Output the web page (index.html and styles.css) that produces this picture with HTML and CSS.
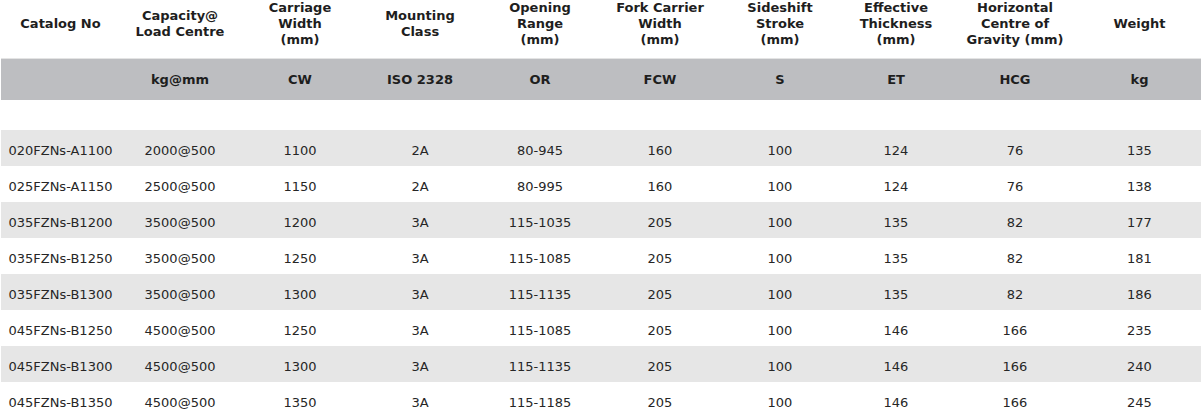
FILE: index.html
```html
<!DOCTYPE html>
<html>
<head>
<meta charset="utf-8">
<link rel="stylesheet" href="styles.css">
</head>
<body>
<table class="spec">
  <colgroup>
    <col class="c1"><col class="c2"><col class="c2"><col class="c2"><col class="c2"><col class="c2"><col class="c2"><col class="c8"><col class="c9"><col class="c10">
  </colgroup>
  <thead>
    <tr class="titles">
      <th>Catalog No</th>
      <th>Capacity@<br>Load Centre</th>
      <th>Carriage<br>Width<br>(mm)</th>
      <th>Mounting<br>Class</th>
      <th>Opening<br>Range<br>(mm)</th>
      <th>Fork Carrier<br>Width<br>(mm)</th>
      <th>Sideshift<br>Stroke<br>(mm)</th>
      <th>Effective<br>Thickness<br>(mm)</th>
      <th>Horizontal<br>Centre of<br>Gravity (mm)</th>
      <th>Weight</th>
    </tr>
    <tr class="units">
      <th></th><th>kg@mm</th><th>CW</th><th>ISO 2328</th><th>OR</th><th>FCW</th><th>S</th><th>ET</th><th>HCG</th><th>kg</th>
    </tr>
  </thead>
  <tbody>
    <tr class="spacer"><td colspan="10"></td></tr>
    <tr><td>020FZNs-A1100</td><td>2000@500</td><td>1100</td><td>2A</td><td>80-945</td><td>160</td><td>100</td><td>124</td><td>76</td><td>135</td></tr>
    <tr><td>025FZNs-A1150</td><td>2500@500</td><td>1150</td><td>2A</td><td>80-995</td><td>160</td><td>100</td><td>124</td><td>76</td><td>138</td></tr>
    <tr><td>035FZNs-B1200</td><td>3500@500</td><td>1200</td><td>3A</td><td>115-1035</td><td>205</td><td>100</td><td>135</td><td>82</td><td>177</td></tr>
    <tr><td>035FZNs-B1250</td><td>3500@500</td><td>1250</td><td>3A</td><td>115-1085</td><td>205</td><td>100</td><td>135</td><td>82</td><td>181</td></tr>
    <tr><td>035FZNs-B1300</td><td>3500@500</td><td>1300</td><td>3A</td><td>115-1135</td><td>205</td><td>100</td><td>135</td><td>82</td><td>186</td></tr>
    <tr><td>045FZNs-B1250</td><td>4500@500</td><td>1250</td><td>3A</td><td>115-1085</td><td>205</td><td>100</td><td>146</td><td>166</td><td>235</td></tr>
    <tr><td>045FZNs-B1300</td><td>4500@500</td><td>1300</td><td>3A</td><td>115-1135</td><td>205</td><td>100</td><td>146</td><td>166</td><td>240</td></tr>
    <tr><td>045FZNs-B1350</td><td>4500@500</td><td>1350</td><td>3A</td><td>115-1185</td><td>205</td><td>100</td><td>146</td><td>166</td><td>245</td></tr>
  </tbody>
</table>
</body>
</html>
```
FILE: styles.css
```css
html, body {
  margin: 0;
  padding: 0;
  background: #ffffff;
}
body {
  font-family: "DejaVu Sans", "Liberation Sans", sans-serif;
  color: #222;
  overflow: hidden;
}
.spec {
  margin-left: 1px;
  width: 1200px;
  table-layout: fixed;
  border-collapse: collapse;
}
.c1 { width: 119px; }
.c2 { width: 120px; }
.c8 { width: 112px; }
.c9 { width: 126px; }
.c10 { width: 123px; }

.spec th {
  font-weight: bold;
  font-size: 13px;
  line-height: 16px;
  text-align: center;
  color: #1e1e1e;
  padding: 0;
}
.spec .titles th {
  box-sizing: border-box;
  height: 58px;
  vertical-align: middle;
  padding: 0 0 10px;
}
.spec .units th {
  background: #bdbec1;
  border-top: 1px solid #e4e4e4;
  height: 41px;
  vertical-align: middle;
  padding-top: 2px;
  box-sizing: border-box;
}
.spec td {
  box-sizing: border-box;
  font-size: 13px;
  line-height: 16px;
  text-align: center;
  color: #262626;
  height: 36px;
  padding: 6px 0 0;
  vertical-align: middle;
}
.spec .spacer td {
  height: 30px;
  padding: 0;
  background: #fff;
}
.spec tbody tr:nth-child(even) td {
  background: #e6e6e6;
}
```
